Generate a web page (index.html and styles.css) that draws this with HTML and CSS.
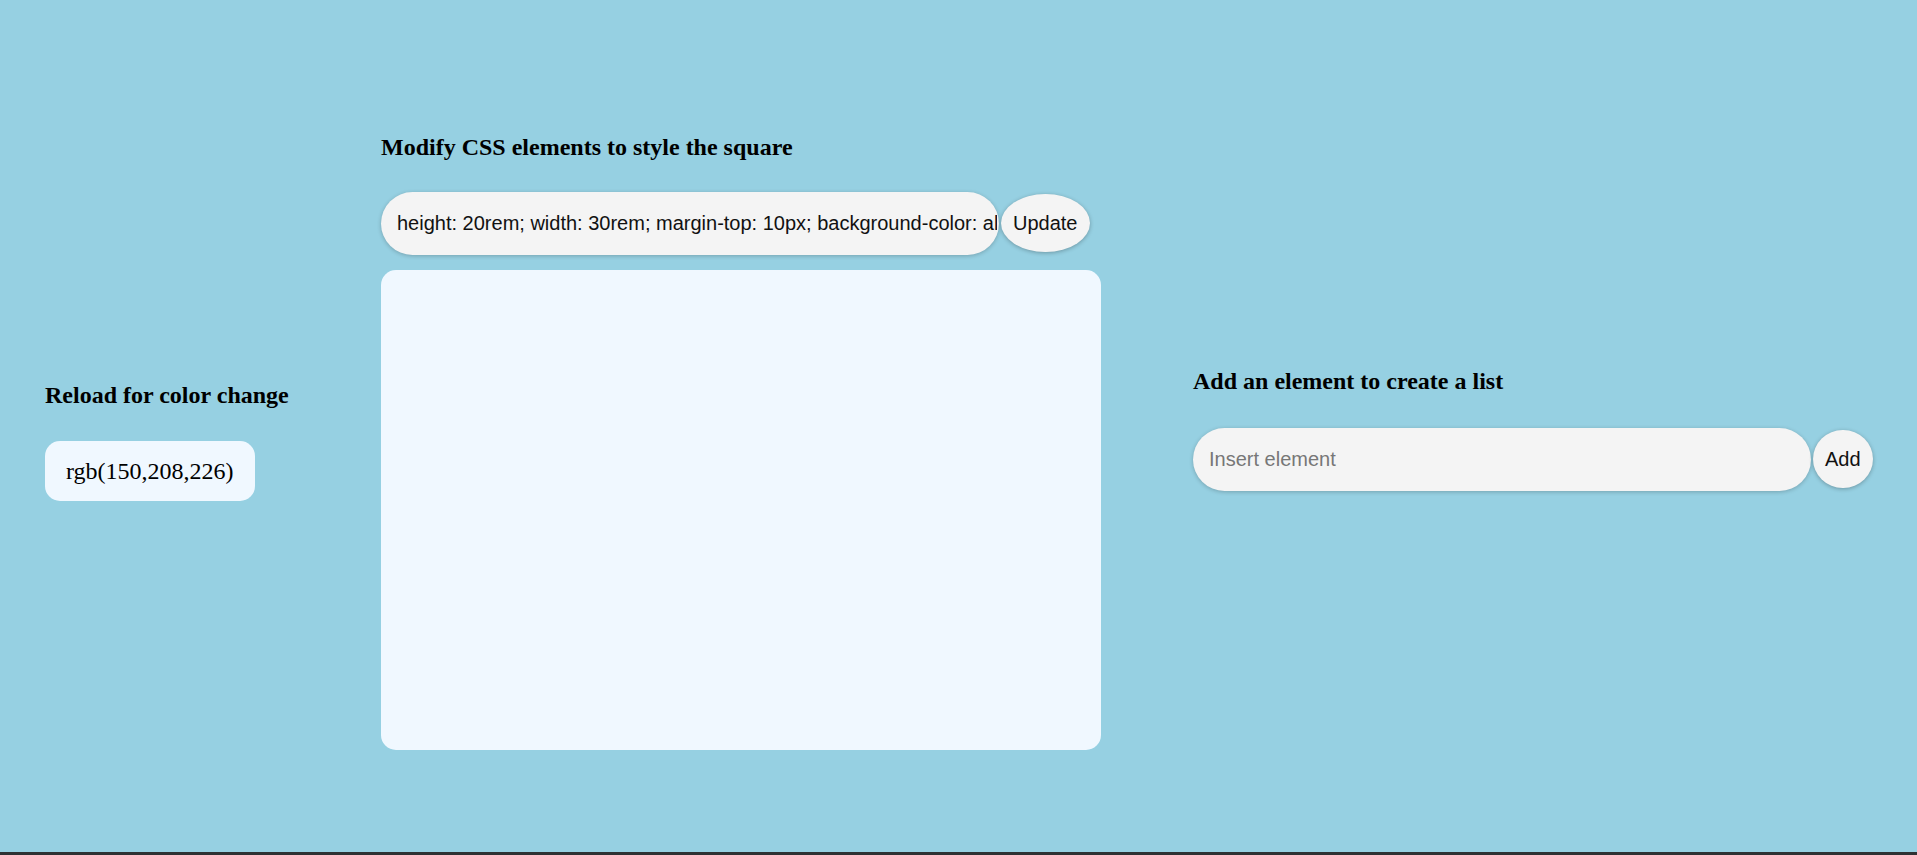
FILE: index.html
```html
<!DOCTYPE html>
<html lang="en">
<head>
<meta charset="utf-8">
<title>CSS playground</title>
<link rel="stylesheet" href="styles.css">
</head>
<body>
<main class="page">
  <section class="col col-left">
    <h2 class="title">Reload for color change</h2>
    <div class="color-chip">rgb(150,208,226)</div>
  </section>
  <section class="col col-mid">
    <h2 class="title title-mid">Modify CSS elements to style the square</h2>
    <div class="field-row">
      <input class="field" type="text" value="height: 20rem; width: 30rem; margin-top: 10px; background-color: aliceblue; border-radius: 15px;">
      <button class="pill-btn" type="button">Update</button>
    </div>
    <div class="square"></div>
  </section>
  <section class="col col-right">
    <h2 class="title title-right">Add an element to create a list</h2>
    <div class="field-row">
      <input class="field" type="text" placeholder="Insert element">
      <button class="pill-btn" type="button">Add</button>
    </div>
    <ul class="list"></ul>
  </section>
</main>
<div class="bottom-strip"></div>
</body>
</html>
```

FILE: styles.css
```css
html, body {
  margin: 0;
  padding: 0;
}

body {
  background: rgb(150, 208, 226);
  font-family: "Liberation Serif", "Times New Roman", serif;
  color: #000;
  height: 855px;
  display: flex;
  flex-direction: column;
  overflow: hidden;
}

.page {
  flex: 1;
  display: flex;
  align-items: center;
  gap: 92px;
  padding: 31px 0 0 45px;
  box-sizing: border-box;
}

.col {
  display: flex;
  flex-direction: column;
  align-items: flex-start;
}

.col-left {
  width: 244px;
}

.col-mid {
  width: 720px;
}

.col-right {
  width: 681px;
}

.title {
  font-size: 24px;
  font-weight: bold;
  line-height: normal;
  margin: 0 0 32px 0;
  white-space: nowrap;
}

.title-mid {
  margin-bottom: 31px;
}

.title-right {
  margin-bottom: 33px;
}

.color-chip {
  background: aliceblue;
  border-radius: 15px;
  padding: 16px 21px;
  font-size: 24px;
  line-height: 28px;
}

.field-row {
  display: flex;
  align-items: center;
  gap: 2px;
  height: 63px;
}

.field {
  width: 618px;
  height: 63px;
  box-sizing: border-box;
  border: none;
  outline: none;
  border-radius: 32px;
  background: #f4f4f4;
  box-shadow: 0 1px 4px rgba(0, 0, 0, 0.22);
  padding: 0 2px 0 16px;
  font-family: "Liberation Sans", Arial, sans-serif;
  font-size: 20px;
  color: #111;
}

.field::placeholder {
  color: #777;
}

.pill-btn {
  height: 58px;
  padding: 0 12px;
  border: none;
  border-radius: 50%;
  background: #f4f4f4;
  box-shadow: 0 1px 4px rgba(0, 0, 0, 0.28);
  font-family: "Liberation Sans", Arial, sans-serif;
  font-size: 20px;
  color: #111;
}

.square {
  margin-top: 15px;
  width: 720px;
  height: 480px;
  background: aliceblue;
  border-radius: 15px;
}

.list {
  margin: 0;
  padding: 0;
  height: 25px;
}

.bottom-strip {
  height: 3px;
  background: #2e3133;
}
```
